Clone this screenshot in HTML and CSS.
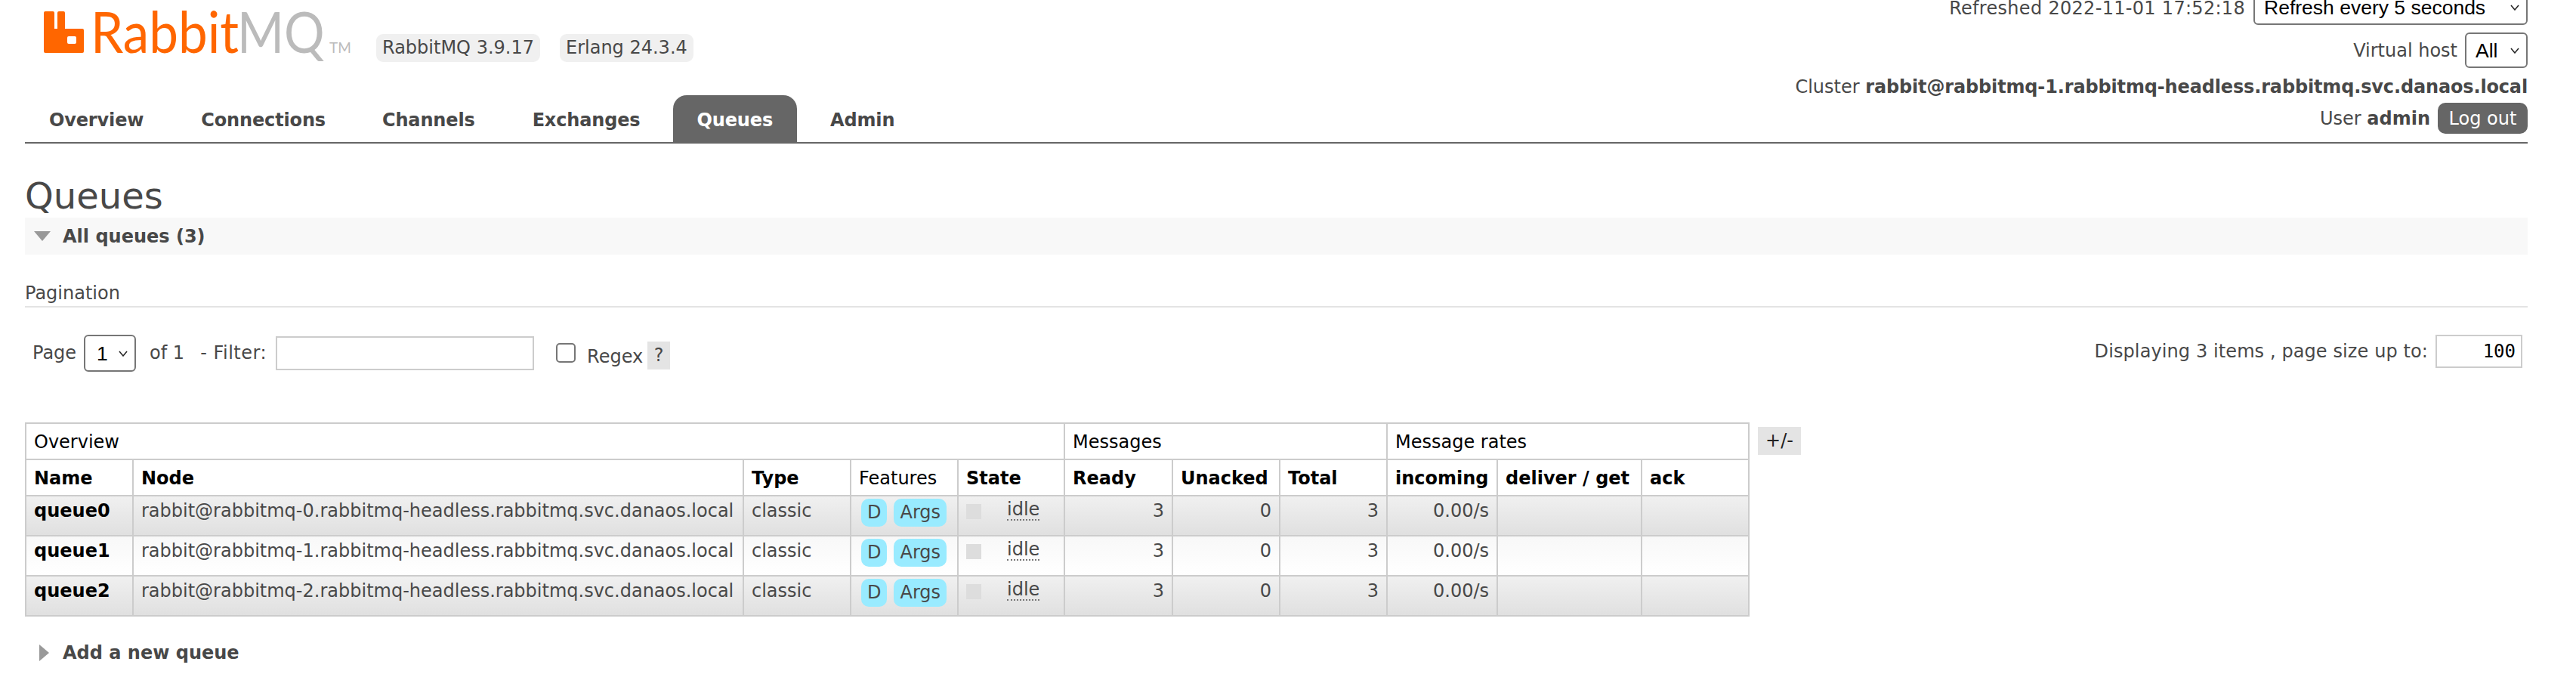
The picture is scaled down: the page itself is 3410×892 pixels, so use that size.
FILE: index.html
```html
<!DOCTYPE html>
<html lang="en">
<head>
<meta charset="utf-8">
<title>RabbitMQ Management</title>
<link rel="stylesheet" href="styles.css">
</head>
<body>
<div class="page">
  <header class="header">
    <div class="head-left">
      <div class="brand">
        <svg class="logo" width="420" height="60" viewBox="0 0 420 60">
          <path class="logo-o" d="M3 0h10a2 2 0 0 1 2 2v21h4V2a2 2 0 0 1 2-2h6a2 2 0 0 1 2 2v21h23a2 2 0 0 1 2 2v28a2 2 0 0 1-2 2H3a2 2 0 0 1-2-2V2a2 2 0 0 1 2-2zM34 33a2 2 0 0 0-2 2v6a2 2 0 0 0 2 2h8a2 2 0 0 0 2-2v-6a2 2 0 0 0-2-2z" fill-rule="evenodd" transform="translate(1 0)"/>
          <text class="logo-text logo-o" transform="translate(64 55) scale(.91 1)">Rabbit</text>
          <text class="logo-text logo-g" transform="translate(258 55) scale(.88 1)">MQ</text>
          <text class="logo-tm logo-g" transform="translate(380 55) scale(.95 1)">TM</text>
        </svg>
        <span class="version first">RabbitMQ 3.9.17</span>
        <span class="version">Erlang 24.3.4</span>
      </div>
      <nav class="nav">
        <a class="tab t1">Overview</a>
        <a class="tab t2">Connections</a>
        <a class="tab t3">Channels</a>
        <a class="tab t4">Exchanges</a>
        <a class="tab active">Queues</a>
        <a class="tab t6">Admin</a>
      </nav>
    </div>
    <div class="head-right">
      <div class="hr-row r1"><span class="refreshed">Refreshed 2022-11-01 17:52:18</span><select class="sel sel-refresh"><option>Refresh every 5 seconds</option></select></div>
      <div class="hr-row r2"><span>Virtual host</span><select class="sel sel-vhost"><option>All</option></select></div>
      <div class="hr-row r3"><span>Cluster&nbsp;<b class="cluster">rabbit@rabbitmq-1.rabbitmq-headless.rabbitmq.svc.danaos.local</b></span></div>
      <div class="hr-row r4"><span>User&nbsp;<b>admin</b></span><button class="logout">Log out</button></div>
    </div>
  </header>

  <h1 class="title">Queues</h1>
  <h2 class="section-head"><span class="tri-down"></span>All queues (3)</h2>

  <h3 class="pag-title">Pagination</h3>
  <div class="pag-row">
    <div class="pag-left">
      <label class="lbl-page">Page</label>
      <select class="sel sel-page"><option>1</option></select>
      <span class="of">of 1</span>
      <label class="lbl-filter">- Filter:</label>
      <input class="txt filter" type="text">
      <span class="cb"></span>
      <label class="regex">Regex</label>
      <span class="help">?</span>
    </div>
    <div class="pag-right">
      <label>Displaying 3 items , page size up to:</label>
      <input class="txt size" type="text" value="100">
    </div>
  </div>

  <div class="table-wrap">
    <table class="queues">
      <colgroup>
        <col class="c142"><col class="c808"><col class="c142"><col class="c142"><col class="c141"><col class="c143"><col class="c142"><col class="c142"><col class="c146"><col class="c191"><col class="c142">
      </colgroup>
      <thead>
        <tr class="group"><th colspan="5">Overview</th><th colspan="3">Messages</th><th colspan="3">Message rates</th></tr>
        <tr class="cols"><th>Name</th><th>Node</th><th>Type</th><th class="plain">Features</th><th>State</th><th>Ready</th><th>Unacked</th><th>Total</th><th>incoming</th><th>deliver / get</th><th>ack</th></tr>
      </thead>
      <tbody>
        <tr class="alt1"><td class="name">queue0</td><td>rabbit@rabbitmq-0.rabbitmq-headless.rabbitmq.svc.danaos.local</td><td>classic</td><td class="feat"><span class="pill">D</span><span class="pill">Args</span></td><td><span class="state"><i class="sq"></i><abbr>idle</abbr></span></td><td class="num">3</td><td class="num">0</td><td class="num">3</td><td class="num">0.00/s</td><td></td><td></td></tr>
        <tr class="alt2"><td class="name">queue1</td><td>rabbit@rabbitmq-1.rabbitmq-headless.rabbitmq.svc.danaos.local</td><td>classic</td><td class="feat"><span class="pill">D</span><span class="pill">Args</span></td><td><span class="state"><i class="sq"></i><abbr>idle</abbr></span></td><td class="num">3</td><td class="num">0</td><td class="num">3</td><td class="num">0.00/s</td><td></td><td></td></tr>
        <tr class="alt1"><td class="name">queue2</td><td>rabbit@rabbitmq-2.rabbitmq-headless.rabbitmq.svc.danaos.local</td><td>classic</td><td class="feat"><span class="pill">D</span><span class="pill">Args</span></td><td><span class="state"><i class="sq"></i><abbr>idle</abbr></span></td><td class="num">3</td><td class="num">0</td><td class="num">3</td><td class="num">0.00/s</td><td></td><td></td></tr>
      </tbody>
    </table>
    <span class="plusminus">+/-</span>
  </div>

  <h2 class="add"><span class="tri-right"></span>Add a new queue</h2>
</div>
</body>
</html>
```
FILE: styles.css
```css
* { box-sizing: border-box; }
html, body { margin: 0; padding: 0; background: #fff; overflow: hidden; }
body { font: 24px/30px "DejaVu Sans", sans-serif; color: #484848; }
.page { width: 3410px; height: 892px; padding: 0 64px 0 33px; overflow: hidden; }

/* Header */
.header { display: flex; justify-content: space-between; height: 190px; border-bottom: 2px solid #666; }
.brand { display: flex; height: 126px; padding: 15px 0 0 23px; }
.logo { flex: none; overflow: visible; }
.logo-o { fill: #f60; }
.logo-g { fill: #bbb; }
.logo-text { font: 400 76px "Lato", sans-serif; }
.logo-tm { font: 400 20px "Lato", sans-serif; }
.version { height: 37px; margin-top: 30px; padding: 0 8px; background: #f0f0f0; border-radius: 9px; line-height: 37px; white-space: nowrap; }
.version.first { margin-left: 22px; margin-right: 26px; }
.nav { display: flex; height: 62px; }
.tab { display: block; font-weight: bold; line-height: 66px; white-space: nowrap; letter-spacing: -0.15px; }
.t1 { margin-left: 32px; margin-right: 76px; }
.t2 { margin-right: 75px; }
.t3 { margin-right: 76px; }
.t4 { margin-right: 43px; }
.active { padding: 0 32px; background: #666; color: #fff; border-radius: 18px 18px 0 0; }
.t6 { margin-left: 44px; }

.head-right { display: flex; flex-direction: column; align-items: flex-end; margin-top: -14px; }
.hr-row { display: flex; align-items: center; white-space: nowrap; }
.r1 { height: 47px; }
.r2 { height: 47px; margin-top: 10px; }
.r3 { height: 30px; margin-top: 10px; }
.r4 { height: 41px; margin-top: 6px; }
.refreshed { letter-spacing: 0.3px; padding-top: 3px; }
.cluster { letter-spacing: -0.15px; }

.sel {
  appearance: none; -webkit-appearance: none;
  font: 26.5px "Liberation Sans", sans-serif; color: #000;
  background: #fff url("data:image/svg+xml,%3Csvg xmlns='http://www.w3.org/2000/svg' width='12' height='8'%3E%3Cpath d='M1 1l5 6 5-6' fill='none' stroke='%23222' stroke-width='1.5'/%3E%3C/svg%3E") no-repeat right 9px center;
  border: 2px solid #767676; border-radius: 6px;
  padding: 0 32px 0 10px; margin: 0;
}
.sel-refresh { width: 363px; height: 47px; margin-left: 11px; padding-left: 12px; }
.sel-vhost { width: 83px; height: 47px; margin-left: 10px; padding-left: 12px; }
.sel-page { width: 69px; height: 49px; margin-left: 10px; padding-left: 15px; }

.logout { width: 119px; height: 41px; margin: 0 0 0 10px; padding: 0; border: 0; border-radius: 10px; background: #666; color: #fff; font: 24px "DejaVu Sans", sans-serif; }

/* Titles */
.title { margin: 0; height: 98px; padding-top: 44px; font-size: 48px; line-height: 50px; font-weight: normal; color: #484848; }
.section-head { display: flex; align-items: center; margin: 0; height: 49px; background: #f8f8f8; font-size: 24px; font-weight: bold; color: #484848; }
.tri-down { width: 0; height: 0; margin: 0 16px 0 12px; border: 11px solid transparent; border-top: 13px solid #999; border-bottom: 0; }
.pag-title { margin: 36px 0 0; height: 34px; font-size: 24px; line-height: 30px; font-weight: normal; border-bottom: 2px solid #e4e4e4; }

/* Pagination */
.pag-row { display: flex; justify-content: space-between; height: 152px; padding-top: 36px; }
.pag-left { display: flex; align-items: flex-start; padding-left: 10px; }
.lbl-page, .of, .lbl-filter { line-height: 48px; }
.of { margin-left: 18px; }
.lbl-filter { margin-left: 21px; letter-spacing: 0.5px; }
.txt { border: 2px solid #ccc; background: #fff; margin: 0; }
.filter { width: 342px; height: 45px; margin-left: 12px; margin-top: 2px; }
.cb { width: 26px; height: 26px; margin: 11px 0 0 29px; border: 2px solid #767676; border-radius: 5px; }
.regex { margin-left: 15px; line-height: 36px; margin-top: 11px; }
.help { width: 30px; height: 37px; margin: 9px 0 0 6px; background: #e4e4e4; line-height: 37px; text-align: center; }
.pag-right { display: flex; align-items: flex-start; padding-right: 7px; }
.pag-right label { line-height: 44px; margin-right: 10px; letter-spacing: 0.1px; }
.size { width: 115px; height: 44px; padding: 0 7px; text-align: right; font: 24px "DejaVu Sans Mono", monospace; color: #000; }

/* Table */
.table-wrap { display: flex; align-items: flex-start; }
.queues { flex: none; width: 2281px; table-layout: fixed; border-collapse: collapse; }
.c142 { width: 142px; } .c808 { width: 808px; } .c141 { width: 141px; } .c143 { width: 143px; } .c146 { width: 146px; } .c191 { width: 191px; }
.queues th, .queues td { border: 2px solid #ccc; padding: 0 10px; text-align: left; vertical-align: top; white-space: nowrap; }
.queues th { height: 48px; padding-top: 9px; color: #000; font-weight: bold; line-height: 30px; background: #fff; }
.group th, .queues th.plain { font-weight: normal; }
.queues td { height: 53px; padding-top: 4px; line-height: 30px; }
.queues td.name { font-weight: bold; color: #000; }
.queues td.num { text-align: right; }
.queues td.feat { padding-left: 13px; padding-top: 3px; padding-right: 0; }
.alt1 td { background: linear-gradient(#f0f0f0, #e0e0e0); }
.alt2 td { background: linear-gradient(#f8f8f8, #fff); }
.pill { display: inline-block; height: 37px; margin-right: 9px; padding: 0 8px; background: #99ebff; border-radius: 10px; line-height: 37px; }
.state { display: flex; align-items: flex-start; }
.sq { width: 20px; height: 20px; margin-top: 6px; background: #ddd; }
abbr { margin-left: 34px; border-bottom: 2px dotted #777; line-height: 27px; height: 28px; }
.plusminus { margin: 6px 0 0 11px; width: 57px; height: 37px; background: #e4e4e4; color: #222; line-height: 37px; text-align: center; }

/* Add */
.add { display: flex; align-items: center; margin: 33px 0 0; height: 30px; font-size: 24px; font-weight: bold; color: #484848; }
.tri-right { width: 0; height: 0; margin: 0 18px 0 19px; border: 11px solid transparent; border-left: 13px solid #999; border-right: 0; }
```
